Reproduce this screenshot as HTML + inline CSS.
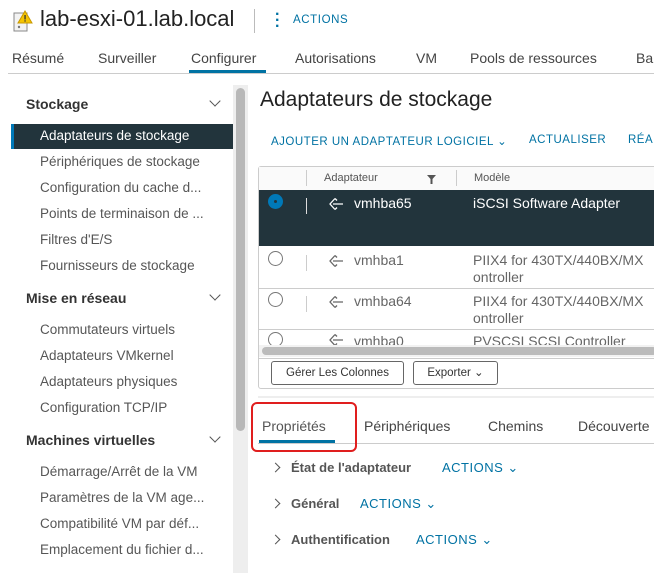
<!DOCTYPE html>
<html><head><meta charset="utf-8"><style>
*{box-sizing:border-box;margin:0;padding:0}
body{width:654px;height:573px;overflow:hidden;background:#fff;font-family:"Liberation Sans",sans-serif;color:#333;position:relative}
.a{position:absolute;white-space:nowrap}
.blue{color:#0072a3}
.nav{font-size:14px;color:#444}
.li{font-size:13.5px;color:#565656;left:40px}
.hd{font-size:14px;font-weight:bold;color:#333;left:26px}
.chev{position:absolute;width:8px;height:8px;border-right:1.6px solid #555;border-bottom:1.6px solid #555;transform:rotate(45deg)}
.rad{position:absolute;width:15px;height:15px;border:1.3px solid #777;border-radius:50%;background:#fff}
.cell{font-size:14px;color:#666}
.sect{font-size:13px;font-weight:bold;color:#555}
.act{font-size:13px;color:#0072a3;letter-spacing:.5px}
.rchev{position:absolute;width:7px;height:7px;border-right:1.6px solid #555;border-top:1.6px solid #555;transform:rotate(45deg)}
</style></head><body>
<svg width="0" height="0" style="position:absolute"><defs><symbol id="ad" viewBox="0 0 16 14"><path d="M7,1.5 L2,7 L7,12.5 M5,7 H15 M7,1.5 L9,3.5 M7,12.5 L9,10.5" fill="none" stroke="currentColor" stroke-width="1.3"/></symbol></defs></svg>
<!-- header -->
<svg class="a" style="left:11px;top:9px" width="22" height="26" viewBox="0 0 22 26"><rect x="3" y="4" width="13" height="18" fill="#f3f3f3" stroke="#888"/><circle cx="8" cy="18" r="1.2" fill="#777"/><polygon points="14,2 21,14 7,14" fill="#f5c400" stroke="#c89800"/><rect x="13.4" y="6" width="1.3" height="4.5" fill="#333"/><rect x="13.4" y="11.3" width="1.3" height="1.3" fill="#333"/></svg>
<div class="a" style="left:40px;top:6px;font-size:22px;color:#222">lab-esxi-01.lab.local</div>
<div class="a" style="left:254px;top:9px;width:1px;height:24px;background:#bbb"></div>
<div class="a" style="left:275px;top:12px;font-size:16px;font-weight:bold;color:#0072a3;line-height:6px">·<br>·<br>·</div>
<div class="a blue" style="left:293px;top:14px;font-size:11.5px;letter-spacing:.6px">ACTIONS</div>
<div class="a nav" style="left:12px;top:50px">Résumé</div>
<div class="a nav" style="left:98px;top:50px">Surveiller</div>
<div class="a nav" style="left:191px;top:50px">Configurer</div>
<div class="a" style="left:189px;top:70px;width:77px;height:3px;background:#0072a3"></div>
<div class="a nav" style="left:295px;top:50px">Autorisations</div>
<div class="a nav" style="left:416px;top:50px">VM</div>
<div class="a nav" style="left:470px;top:50px">Pools de ressources</div>
<div class="a nav" style="left:636px;top:50px">Ba</div>
<div class="a" style="left:8px;top:73px;width:646px;height:1px;background:#ccc"></div>
<!-- left panel -->
<div class="a hd" style="top:96px">Stockage</div><div class="chev" style="left:211px;top:97px"></div>
<div class="a" style="left:11px;top:124px;width:222px;height:25px;background:#22343c"></div>
<div class="a" style="left:11px;top:124px;width:3px;height:25px;background:#0079b8"></div>
<div class="a li" style="top:128px;color:#fff">Adaptateurs de stockage</div>
<div class="a li" style="top:154px">Périphériques de stockage</div>
<div class="a li" style="top:180px">Configuration du cache d...</div>
<div class="a li" style="top:206px">Points de terminaison de ...</div>
<div class="a li" style="top:232px">Filtres d'E/S</div>
<div class="a li" style="top:258px">Fournisseurs de stockage</div>
<div class="a hd" style="top:290px">Mise en réseau</div><div class="chev" style="left:211px;top:291px"></div>
<div class="a li" style="top:322px">Commutateurs virtuels</div>
<div class="a li" style="top:348px">Adaptateurs VMkernel</div>
<div class="a li" style="top:374px">Adaptateurs physiques</div>
<div class="a li" style="top:400px">Configuration TCP/IP</div>
<div class="a hd" style="top:432px">Machines virtuelles</div><div class="chev" style="left:211px;top:433px"></div>
<div class="a li" style="top:464px">Démarrage/Arrêt de la VM</div>
<div class="a li" style="top:490px">Paramètres de la VM age...</div>
<div class="a li" style="top:516px">Compatibilité VM par déf...</div>
<div class="a li" style="top:542px">Emplacement du fichier d...</div>
<div class="a" style="left:233px;top:85px;width:15px;height:488px;background:#eee"></div>
<div class="a" style="left:236px;top:88px;width:9px;height:343px;background:#b8b8b8;border-radius:5px"></div>
<!-- main -->
<div class="a" style="left:260px;top:88px;font-size:21px;color:#222">Adaptateurs de stockage</div>
<div class="a act" style="left:271px;top:134px;font-size:11.5px">AJOUTER UN ADAPTATEUR LOGICIEL ⌄</div>
<div class="a act" style="left:529px;top:134px;font-size:11.5px">ACTUALISER</div>
<div class="a act" style="left:628px;top:134px;font-size:11.5px">RÉA</div>
<div class="a" style="left:258px;top:166px;width:420px;height:223px;border:1px solid #ccc;border-radius:3px"></div>
<div class="a" style="left:259px;top:167px;width:400px;height:23px;background:#fafafa"></div>
<div class="a" style="left:306px;top:170px;width:1px;height:16px;background:#ccc"></div>
<div class="a" style="left:456px;top:170px;width:1px;height:16px;background:#ccc"></div>
<div class="a" style="left:324px;top:172px;font-size:11px;color:#555">Adaptateur</div>
<svg class="a" style="left:427px;top:175px" width="9" height="9"><polygon points="0,0 9,0 5.5,4 5.5,9 3.5,9 3.5,4" fill="#555"/></svg>
<div class="a" style="left:474px;top:172px;font-size:11px;color:#555">Modèle</div>
<div class="a" style="left:259px;top:190px;width:400px;height:56px;background:#22343c"></div>
<div class="a" style="left:268px;top:194px;width:15px;height:15px;border-radius:50%;background:#0079b8"></div>
<div class="a" style="left:274px;top:200px;width:3px;height:3px;border-radius:50%;background:#22343c"></div>
<div class="a" style="left:306px;top:198px;width:1px;height:16px;background:#ddd"></div>
<svg class="a" style="left:328px;top:197px;color:#fff" width="16" height="14"><use href="#ad"/></svg>
<div class="a" style="left:354px;top:195px;font-size:14px;color:#fff">vmhba65</div>
<div class="a" style="left:473px;top:195px;font-size:14px;color:#fff">iSCSI Software Adapter</div>
<div class="rad" style="left:268px;top:251px"></div>
<div class="a" style="left:306px;top:255px;width:1px;height:16px;background:#ccc"></div>
<svg class="a" style="left:328px;top:254px;color:#666" width="16" height="14"><use href="#ad"/></svg>
<div class="a cell" style="left:354px;top:252px">vmhba1</div>
<div class="a cell" style="left:473px;top:252px;line-height:17px">PIIX4 for 430TX/440BX/MX<br>ontroller</div>
<div class="a" style="left:259px;top:288px;width:400px;height:1px;background:#ccc"></div>
<div class="rad" style="left:268px;top:292px"></div>
<div class="a" style="left:306px;top:296px;width:1px;height:16px;background:#ccc"></div>
<svg class="a" style="left:328px;top:295px;color:#666" width="16" height="14"><use href="#ad"/></svg>
<div class="a cell" style="left:354px;top:293px">vmhba64</div>
<div class="a cell" style="left:473px;top:293px;line-height:17px">PIIX4 for 430TX/440BX/MX<br>ontroller</div>
<div class="a" style="left:259px;top:329px;width:400px;height:1px;background:#ccc"></div>
<div style="position:absolute;left:259px;top:330px;width:400px;height:15px;overflow:hidden">
<div class="rad" style="left:9px;top:2px"></div>
<svg class="a" style="left:69px;top:3px;color:#666" width="16" height="14"><use href="#ad"/></svg>
<div class="a cell" style="left:95px;top:3px">vmhba0</div>
<div class="a cell" style="left:214px;top:3px">PVSCSI SCSI Controller</div></div>
<div class="a" style="left:259px;top:345px;width:400px;height:12px;background:#f2f2f2"></div>
<div class="a" style="left:262px;top:347px;width:395px;height:8px;background:#bbb;border-radius:4px"></div>
<div class="a" style="left:259px;top:358px;width:400px;height:1px;background:#ccc"></div>
<div class="a" style="left:271px;top:361px;width:133px;height:24px;border:1px solid #666;border-radius:3px;font-size:11.5px;color:#333;text-align:center;line-height:22px">Gérer Les Colonnes</div>
<div class="a" style="left:413px;top:361px;width:85px;height:24px;border:1px solid #666;border-radius:3px;font-size:11.5px;color:#333;text-align:center;line-height:22px">Exporter ⌄</div>
<div class="a" style="left:258px;top:396px;width:396px;height:2px;background:#eee"></div>
<!-- tabs -->
<div class="a nav" style="left:262px;top:418px;color:#555">Propriétés</div>
<div class="a" style="left:259px;top:440px;width:76px;height:3px;background:#0072a3"></div>
<div class="a nav" style="left:364px;top:418px">Périphériques</div>
<div class="a nav" style="left:488px;top:418px">Chemins</div>
<div class="a nav" style="left:578px;top:418px">Découverte</div>
<div class="a" style="left:258px;top:443px;width:396px;height:1px;background:#ccc"></div>
<div class="a" style="left:251px;top:402px;width:106px;height:50px;border:2px solid #e01e1e;border-radius:6px"></div>
<div class="rchev" style="left:272px;top:464px"></div>
<div class="a sect" style="left:291px;top:460px">État de l'adaptateur</div>
<div class="a act" style="left:442px;top:460px">ACTIONS ⌄</div>
<div class="rchev" style="left:272px;top:500px"></div>
<div class="a sect" style="left:291px;top:496px">Général</div>
<div class="a act" style="left:360px;top:496px">ACTIONS ⌄</div>
<div class="rchev" style="left:272px;top:536px"></div>
<div class="a sect" style="left:291px;top:532px">Authentification</div>
<div class="a act" style="left:416px;top:532px">ACTIONS ⌄</div>
</body></html>
